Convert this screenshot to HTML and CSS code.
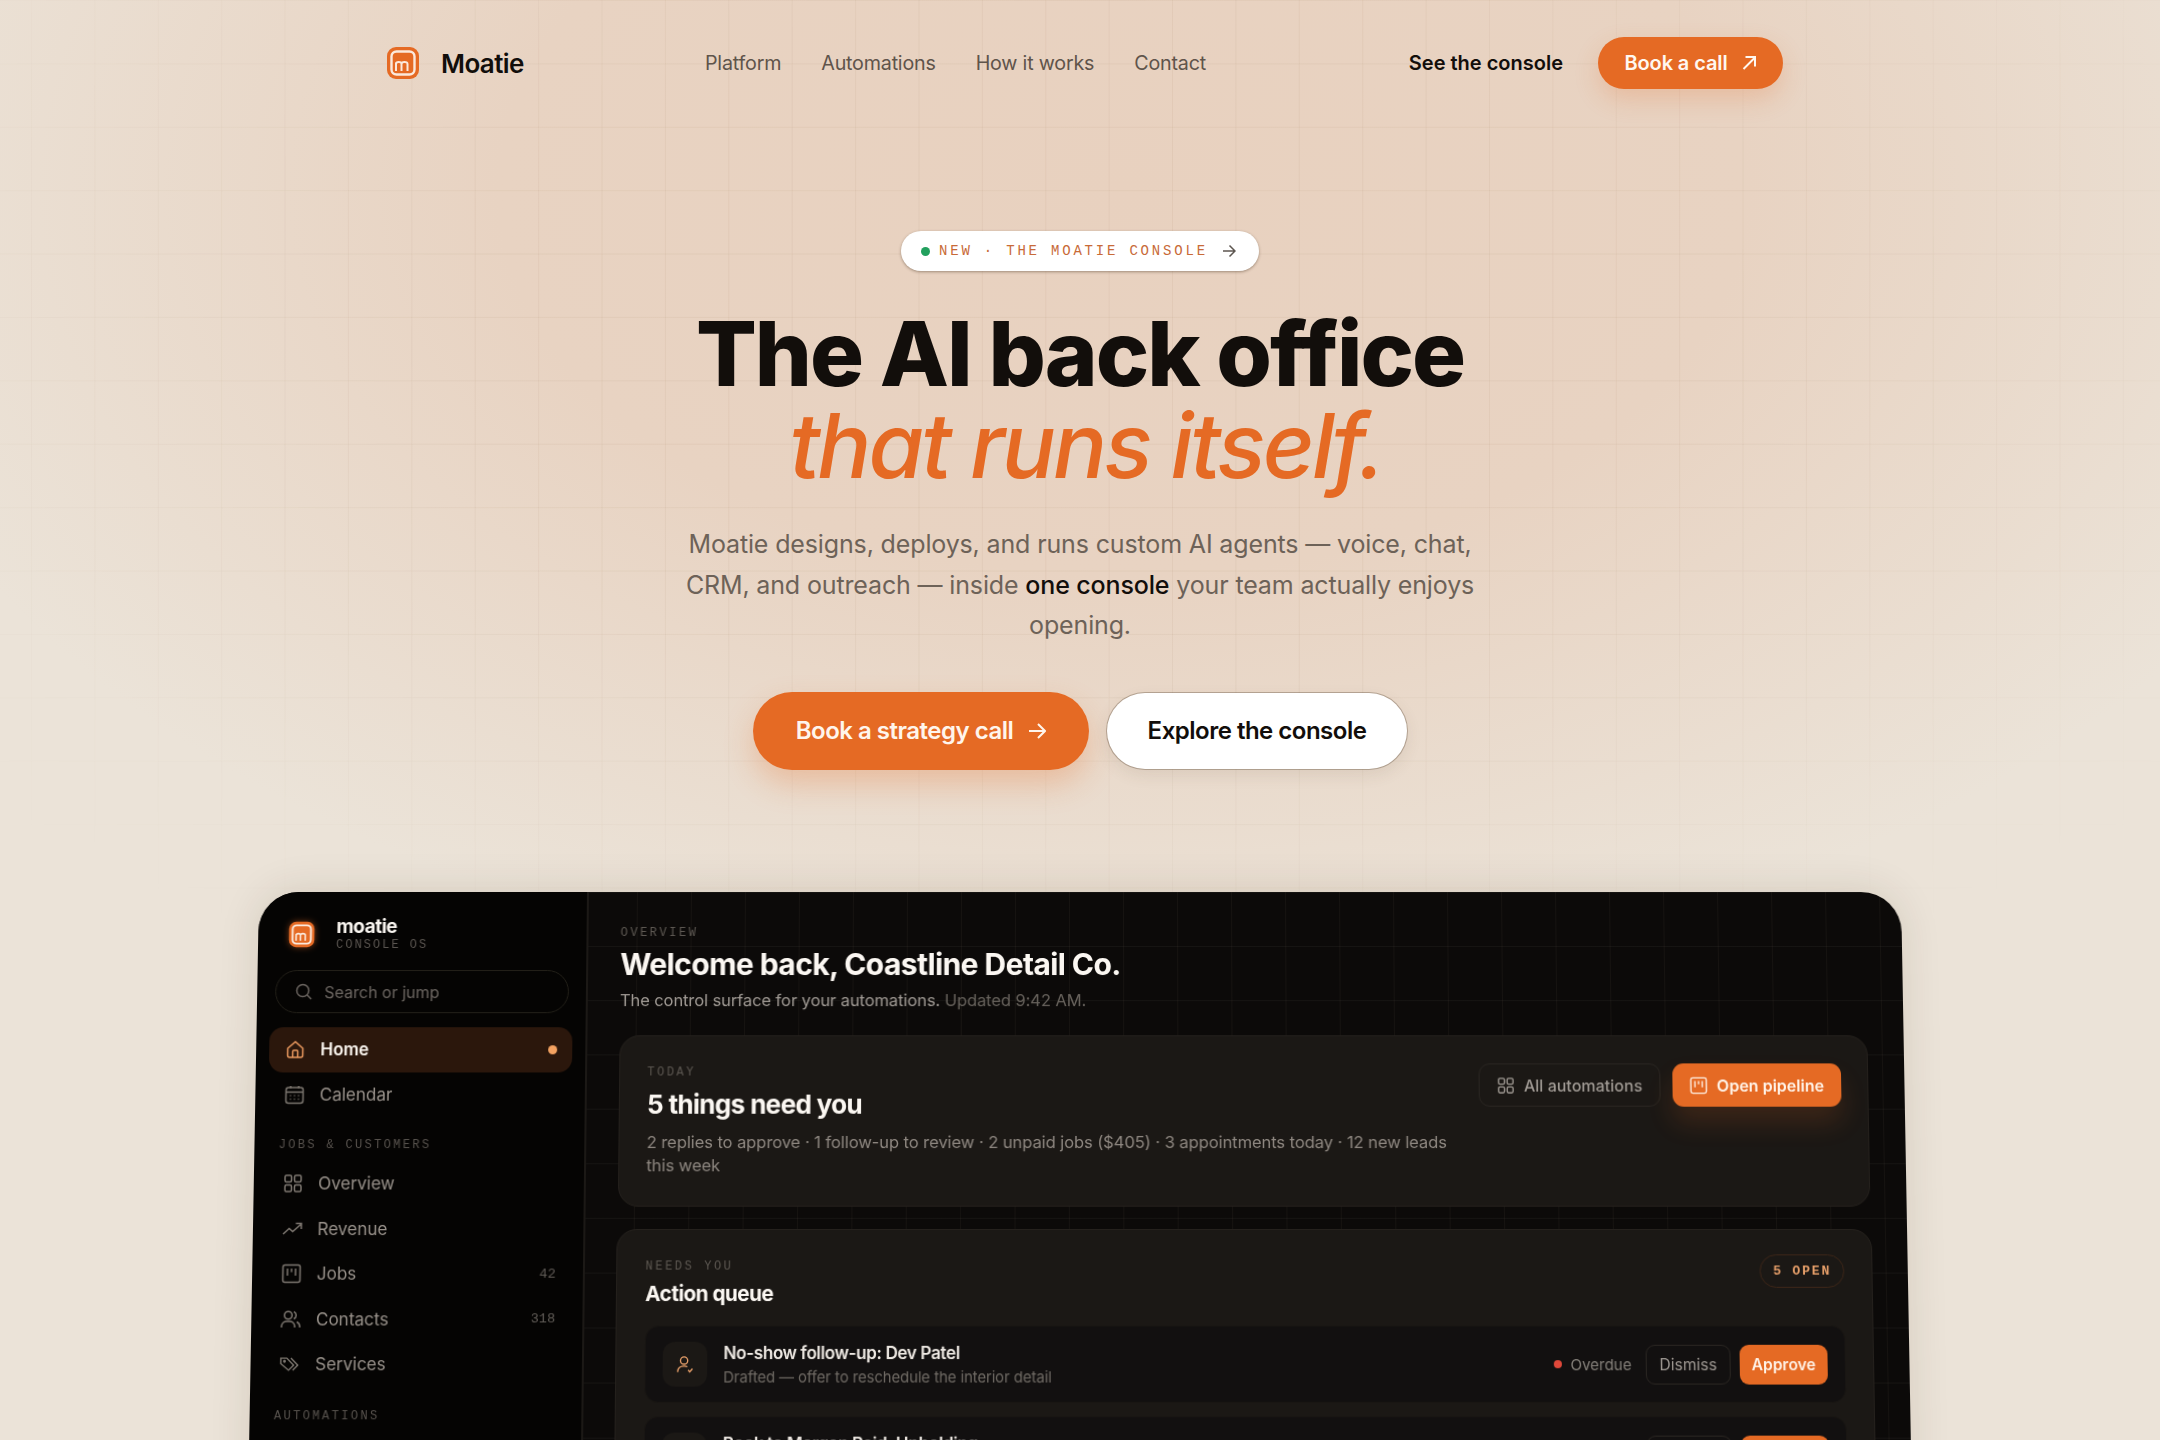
FILE: index.html
```html
<!DOCTYPE html>
<html lang="en">

<head>
    <meta charset="UTF-8">
    <meta name="viewport" content="width=device-width, initial-scale=1.0">
    <title>Moatie - The AI back office</title>
    <link rel="stylesheet" href="styles.css">
</head>

<body>
    <svg class="sprite" aria-hidden="true">
        <defs>
            <symbol id="i-logo" viewBox="0 0 34 34">
                <rect x="1" y="1" width="32" height="32" rx="9" fill="#e56a24" />
                <rect x="5.500" y="5.500" width="23" height="23" rx="5" fill="#e56a24" stroke="#fbe9dc" stroke-width="2.400" />
                <path d="M10 25v-8.500M10 18c0-2.600 5.500-3 5.500 0v7M15.500 18c0-2.600 6-3 6 0v7" fill="none" stroke="#fbe9dc" stroke-width="2" />
            </symbol>
            <symbol id="i-home" viewBox="0 0 20 20">
                <path d="M2.500 9 10 2.500 17.500 9v7a2 2 0 0 1-2 2h-11a2 2 0 0 1-2-2zM7.500 18v-6a1 1 0 0 1 1-1h3a1 1 0 0 1 1 1v6" />
            </symbol>
            <symbol id="i-cal" viewBox="0 0 20 20">
                <rect x="1.500" y="3" width="17" height="15.500" rx="2.500" />
                <path d="M1.500 7.500h17M6 1v3M14 1v3M5.500 11h1M9.500 11h1M13.500 11h1M5.500 14.500h1M9.500 14.500h1M13.500 14.500h1" />
            </symbol>
            <symbol id="i-grid" viewBox="0 0 20 20">
                <rect x="2" y="2" width="6.500" height="6.500" rx="1.500" />
                <rect x="11.500" y="2" width="6.500" height="6.500" rx="1.500" />
                <rect x="2" y="11.500" width="6.500" height="6.500" rx="1.500" />
                <rect x="11.500" y="11.500" width="6.500" height="6.500" rx="1.500" />
            </symbol>
            <symbol id="i-trend" viewBox="0 0 20 20">
                <path d="M1 15l6-5.500 3.500 3L19 5M13.500 4.500H19V10" />
            </symbol>
            <symbol id="i-board" viewBox="0 0 20 20">
                <rect x="1.500" y="1.500" width="17" height="17" rx="2" />
                <path d="M6 5v7M10 5v3.500M14 5v7" />
            </symbol>
            <symbol id="i-users" viewBox="0 0 20 20">
                <circle cx="7.500" cy="6" r="3.800" />
                <path d="M1 18v-1.500A5 5 0 0 1 6 12h3a5 5 0 0 1 5 4.500V18M13 2.500a3.800 3.800 0 0 1 0 7M16 12.500a5 5 0 0 1 3 4.500v1" />
            </symbol>
            <symbol id="i-tags" viewBox="0 0 22 20">
                <path d="M1 3.500h6.500L15 11l-5.500 5.500L1 9.500zM12 3.500 19.500 11 14 16.500" />
                <circle cx="5" cy="7" r="0.800" />
            </symbol>
            <symbol id="i-person" viewBox="0 0 20 20">
                <circle cx="9" cy="6" r="4" />
                <path d="M2 18.500c0-4 2.500-6.500 7-6.500 1.500 0 2.700.3 3.700.8M13.500 16.500l1.800 1.800 3-3.300" />
            </symbol>
        </defs>
    </svg>

    <div class="page">
        <header class="topbar">
            <a class="brand">
                <svg class="brand-mark"><use href="#i-logo" /></svg>
                <span>Moatie</span>
            </a>
            <nav class="nav-links">
                <a>Platform</a>
                <a>Automations</a>
                <a>How it works</a>
                <a>Contact</a>
            </nav>
            <div class="nav-actions">
                <a class="see-link">See the console</a>
                <a class="btn-call">Book a call
                    <svg width="16" height="16" viewBox="0 0 16 16" fill="none" stroke="currentColor" stroke-width="2"><path d="M2.500 14 14 2.500M4.500 2h9.500v9.500" /></svg>
                </a>
            </div>
        </header>

        <section class="hero">
            <div class="pill">
                <span class="pill-dot"></span>
                <span class="pill-text">NEW · THE MOATIE CONSOLE</span>
                <svg width="14" height="14" viewBox="0 0 14 14" fill="none" stroke="#5d5650" stroke-width="1.500"><path d="M1 7h12M7.500 1.500 13 7l-5.500 5.500" /></svg>
            </div>
            <h1>The AI back office<em>that runs itself.</em></h1>
            <p class="lead">Moatie designs, deploys, and runs custom AI agents — voice, chat, CRM, and outreach — inside <strong>one console</strong> your team actually enjoys opening.</p>
            <div class="hero-actions">
                <a class="btn-primary">Book a strategy call
                    <svg width="18" height="18" viewBox="0 0 18 18" fill="none" stroke="currentColor" stroke-width="2"><path d="M1 9h16M10 2l7 7-7 7" /></svg>
                </a>
                <a class="btn-white">Explore the console</a>
            </div>
        </section>

        <div class="console-wrap">
            <div class="console">
                <aside class="side">
                    <div class="side-brand">
                        <svg class="side-mark"><use href="#i-logo" /></svg>
                        <div>
                            <div class="side-name">moatie</div>
                            <div class="side-os">CONSOLE OS</div>
                        </div>
                    </div>
                    <div class="search">
                        <svg width="17" height="17" viewBox="0 0 17 17" fill="none" stroke="currentColor" stroke-width="1.500"><circle cx="7.500" cy="7.500" r="6" /><path d="m12 12 4 4" /></svg>
                        Search or jump
                    </div>
                    <a class="item active">
                        <svg class="ico"><use href="#i-home" /></svg>Home<span class="live"></span>
                    </a>
                    <a class="item"><svg class="ico"><use href="#i-cal" /></svg>Calendar</a>
                    <div class="side-label">JOBS &amp; CUSTOMERS</div>
                    <a class="item"><svg class="ico"><use href="#i-grid" /></svg>Overview</a>
                    <a class="item"><svg class="ico"><use href="#i-trend" /></svg>Revenue</a>
                    <a class="item"><svg class="ico"><use href="#i-board" /></svg>Jobs<span class="count">42</span></a>
                    <a class="item"><svg class="ico"><use href="#i-users" /></svg>Contacts<span class="count">318</span></a>
                    <a class="item"><svg class="ico"><use href="#i-tags" /></svg>Services</a>
                    <div class="side-label">AUTOMATIONS</div>
                </aside>

                <main class="main">
                    <div class="eyebrow">OVERVIEW</div>
                    <h2 class="welcome">Welcome back, Coastline Detail Co.</h2>
                    <p class="welcome-sub">The control surface for your automations. <span>Updated 9:42 AM.</span></p>

                    <section class="card today">
                        <div class="today-text">
                            <div class="eyebrow">TODAY</div>
                            <h3>5 things need you</h3>
                            <p>2 replies to approve · 1 follow-up to review · 2 unpaid jobs ($405) · 3 appointments today · 12 new leads this week</p>
                        </div>
                        <div class="today-actions">
                            <a class="btn-ghost"><svg class="ico-sm"><use href="#i-grid" /></svg>All automations</a>
                            <a class="btn-orange"><svg class="ico-sm"><use href="#i-board" /></svg>Open pipeline</a>
                        </div>
                    </section>

                    <section class="card queue">
                        <div class="queue-head">
                            <div>
                                <div class="eyebrow">NEEDS YOU</div>
                                <h4>Action queue</h4>
                            </div>
                            <span class="open-badge">5 OPEN</span>
                        </div>
                        <div class="row">
                            <div class="row-icon"><svg class="ico-sm"><use href="#i-person" /></svg></div>
                            <div class="row-text">
                                <div class="row-title">No-show follow-up: Dev Patel</div>
                                <div class="row-sub">Drafted — offer to reschedule the interior detail</div>
                            </div>
                            <span class="status"><i></i>Overdue</span>
                            <a class="btn-ghost small">Dismiss</a>
                            <a class="btn-orange small">Approve</a>
                        </div>
                        <div class="row">
                            <div class="row-icon"><svg class="ico-sm"><use href="#i-person" /></svg></div>
                            <div class="row-text">
                                <div class="row-title">Book to Morgan Reid: Upholding</div>
                                <div class="row-sub">Drafted — confirm the appointment</div>
                            </div>
                            <a class="btn-ghost small">Dismiss</a>
                            <a class="btn-orange small">Approve</a>
                        </div>
                    </section>
                </main>
            </div>
        </div>
    </div>
</body>

</html>
```

FILE: styles.css
```css
* {
    box-sizing: border-box;
}

html,
body {
    margin: 0;
    height: 100%;
    overflow: hidden;
}

body {
    font-family: Inter, "Liberation Sans", sans-serif;
    color: #120e0b;
    background-color: #ece4d9;
}

.sprite {
    width: 0;
    height: 0;
    display: block;
}

.page {
    height: 1440px;
    overflow: hidden;
    position: relative;
    background:
        radial-gradient(ellipse 1300px 800px at 52% 190px, #e8d1bf 0%, #e8d3c2 48%, rgba(235, 226, 215, 0) 100%),
        #ebe3d8;
}

/* page grid, fades out towards the edges */
.page::before {
    content: "";
    position: absolute;
    inset: 0 0 450px 0;
    background-image:
        linear-gradient(rgba(130, 90, 50, 0.06) 1px, transparent 1px),
        linear-gradient(90deg, rgba(130, 90, 50, 0.06) 1px, transparent 1px);
    background-size: 63.400px 63.400px;
    background-position: 31px 0;
    -webkit-mask-image: radial-gradient(ellipse 65% 75% at 50% 35%, #000 45%, transparent 100%);
    mask-image: radial-gradient(ellipse 65% 75% at 50% 35%, #000 45%, transparent 100%);
}

/* top bar */
.topbar {
    position: relative;
    display: flex;
    align-items: center;
    height: 52px;
    margin: 37px 377px 0 386px;
}

.brand {
    display: flex;
    align-items: center;
    gap: 21px;
    width: 319px;
    font-size: 26px;
    font-weight: 600;
    letter-spacing: -0.6px;
}

.brand-mark {
    width: 34px;
    height: 34px;
}

.nav-links {
    display: flex;
    gap: 40px;
    font-size: 19.700px;
    color: #5f544b;
    letter-spacing: -0.2px;
}

.nav-actions {
    margin-left: auto;
    display: flex;
    align-items: center;
    gap: 35px;
}

.see-link {
    font-size: 20px;
    font-weight: 600;
    letter-spacing: 0;
}

.btn-call {
    display: flex;
    align-items: center;
    justify-content: center;
    gap: 13px;
    width: 185px;
    height: 52px;
    border-radius: 26px;
    background: #e56a24;
    color: #fff7f0;
    font-size: 20px;
    font-weight: 600;
    letter-spacing: -0.1px;
    box-shadow: 0 10px 24px rgba(229, 106, 36, 0.22);
}

/* hero */
.hero {
    position: relative;
    display: flex;
    flex-direction: column;
    align-items: center;
    margin-top: 142px;
    text-align: center;
}

.pill {
    display: flex;
    align-items: center;
    width: 358px;
    height: 40px;
    padding-left: 20px;
    border-radius: 20px;
    background: #fff;
    box-shadow: 0 1px 3px rgba(70, 50, 30, 0.45);
}

.pill-dot {
    width: 9px;
    height: 9px;
    margin-right: 9px;
    border-radius: 50%;
    background: #22a05e;
}

.pill-text {
    margin-right: 14px;
    font-family: "Liberation Mono", monospace;
    font-size: 14px;
    letter-spacing: 2.800px;
    color: #c86a38;
    white-space: nowrap;
}

h1 {
    margin: 37px 0 0;
    font-size: 90px;
    line-height: 92px;
    font-weight: 800;
    letter-spacing: -2px;
    color: #120e0b;
}

h1 em {
    display: block;
    padding-left: 12px;
    font-weight: 500;
    color: #e56a24;
    letter-spacing: -3px;
}

.lead {
    width: 820px;
    margin: 32px 0 0;
    font-size: 25px;
    line-height: 40.500px;
    color: #6d6258;
    letter-spacing: -0.14px;
}

.lead strong {
    font-weight: 500;
    color: #120e0b;
}

.hero-actions {
    display: flex;
    align-items: center;
    gap: 18px;
    margin-top: 46px;
}

.btn-primary {
    display: flex;
    align-items: center;
    justify-content: center;
    gap: 15px;
    width: 336px;
    height: 78px;
    border-radius: 39px;
    background: #e56a24;
    color: #fff5ec;
    font-size: 24px;
    font-weight: 600;
    letter-spacing: -0.5px;
    box-shadow: 0 14px 30px rgba(229, 106, 36, 0.28);
}

.btn-white {
    display: flex;
    align-items: center;
    justify-content: center;
    width: 300px;
    height: 76px;
    border-radius: 38px;
    background: #fff;
    font-size: 24px;
    font-weight: 600;
    letter-spacing: -0.5px;
    box-shadow: 0 0 0 1px rgba(90, 70, 50, 0.35), 0 6px 16px rgba(90, 70, 50, 0.1);
}

/* console mock-up, tilted back a little */
.console-wrap {
    position: absolute;
    top: 892px;
    left: 259px;
    width: 1642px;
    perspective: 2400px;
    perspective-origin: 50% 0;
}

.console {
    display: flex;
    height: 800px;
    border-radius: 40px 40px 0 0;
    overflow: hidden;
    background-color: #0c0a09;
    background-image:
        linear-gradient(rgba(255, 235, 215, 0.045) 1px, transparent 1px),
        linear-gradient(90deg, rgba(255, 215, 180, 0.045) 1px, transparent 1px);
    background-size: 54px 54px;
    transform-origin: 50% 0;
    transform: rotateX(3deg);
    box-shadow: 0 -2px 40px rgba(60, 40, 20, 0.12);
}

.side {
    flex: none;
    width: 330px;
    padding: 28px 13px 0 13px;
    background: #050403;
    border-right: 2px solid #1c1916;
    color: #98918a;
}

.side-brand {
    display: flex;
    align-items: center;
    gap: 21px;
    padding-left: 17px;
    height: 28px;
}

.side-mark {
    width: 27px;
    height: 27px;
    filter: drop-shadow(0 0 3px rgba(229, 106, 36, 0.5));
}

.side-name {
    font-size: 19px;
    line-height: 19px;
    font-weight: 700;
    color: #f8f4ef;
    letter-spacing: -0.5px;
}

.side-os {
    margin-top: 2px;
    font-family: "Liberation Mono", monospace;
    font-size: 12px;
    line-height: 14px;
    letter-spacing: 2px;
    color: #5a5550;
}

.search {
    display: flex;
    align-items: center;
    gap: 12px;
    height: 43px;
    margin: 22px 4px 14px 5px;
    padding-left: 19px;
    border: 1px solid #232019;
    border-radius: 22px;
    font-size: 16px;
    color: #6b6560;
}

.item {
    display: flex;
    align-items: center;
    gap: 15px;
    height: 44.500px;
    padding: 0 14px 0 16px;
    border-radius: 14px;
    font-size: 17px;
    color: #98918a;
}

.item.active {
    background: #2b170c;
    color: #fbf6f0;
    font-weight: 600;
}

.item.active .ico {
    color: #ec9a5f;
}

.ico {
    flex: none;
    width: 20px;
    height: 20px;
    color: #7c766f;
    fill: none;
    stroke: currentColor;
    stroke-width: 1.500;
}

.ico-sm {
    flex: none;
    width: 18px;
    height: 18px;
    fill: none;
    stroke: currentColor;
    stroke-width: 1.500;
}

.live {
    margin-left: auto;
    margin-right: 1px;
    width: 9px;
    height: 9px;
    border-radius: 50%;
    background: #f4a261;
}

.count {
    margin-left: auto;
    font-family: "Liberation Mono", monospace;
    font-size: 13.500px;
    color: #5f5a55;
}

.side-label {
    height: 16px;
    margin: 20px 0 8px 11px;
    font-family: "Liberation Mono", monospace;
    font-size: 12px;
    line-height: 16px;
    letter-spacing: 2.300px;
    color: #55504b;
}

.main {
    flex: 1;
    min-width: 0;
    padding: 33px 36px 0 32px;
}

.eyebrow {
    font-family: "Liberation Mono", monospace;
    font-size: 12px;
    line-height: 16px;
    letter-spacing: 2.500px;
    color: #5c5751;
}

.welcome {
    margin: 5px 0 0;
    font-size: 30px;
    line-height: 36px;
    font-weight: 700;
    letter-spacing: -0.6px;
    color: #fbf7f2;
}

.welcome-sub {
    margin: 8px 0 0;
    font-size: 16.500px;
    line-height: 20px;
    color: #a09a94;
    letter-spacing: -0.1px;
}

.welcome-sub span {
    color: #66615b;
}

.card {
    background: #1b1815;
    border: 1px solid #24201c;
    border-radius: 20px;
}

.today {
    display: flex;
    justify-content: space-between;
    height: 170px;
    margin-top: 25px;
    padding: 28px 26px 0 27px;
}

.today-text {
    width: 810px;
}

.today h3 {
    margin: 8px 0 0;
    font-size: 26px;
    line-height: 32px;
    font-weight: 700;
    letter-spacing: -0.7px;
    color: #fbf7f2;
}

.today p {
    margin: 10px 0 0;
    font-size: 16.500px;
    line-height: 23px;
    color: #8e8780;
    letter-spacing: -0.09px;
}

.today-actions {
    display: flex;
    gap: 12px;
    flex: none;
    margin-top: -1px;
}

.btn-ghost,
.btn-orange {
    display: flex;
    align-items: center;
    justify-content: center;
    gap: 9px;
    height: 43px;
    border-radius: 11px;
    font-size: 16px;
    white-space: nowrap;
}

.btn-ghost {
    width: 181px;
    border: 1px solid #2a2622;
    color: #a09a94;
    font-weight: 500;
}

.btn-orange {
    width: 168px;
    background: #e56a24;
    color: #fff3e8;
    font-weight: 600;
    box-shadow: 0 16px 26px rgba(229, 106, 36, 0.16);
}

.btn-ghost.small,
.btn-orange.small {
    flex: none;
    height: 39px;
    font-size: 15.500px;
    border-radius: 9px;
    box-shadow: none;
}

.btn-ghost.small {
    width: 84px;
    background: #121010;
    font-weight: 400;
}

.btn-orange.small {
    width: 87px;
    margin: 0 0 0 9px;
}

.queue {
    margin-top: 22px;
    margin-left: -1px;
    margin-right: -1px;
    padding: 28px 27px 30px 28px;
    height: 500px;
}

.queue-head {
    display: flex;
    justify-content: space-between;
    align-items: flex-start;
}

.queue h4 {
    margin: 5px 0 0;
    font-size: 20.500px;
    line-height: 28px;
    font-weight: 700;
    letter-spacing: -0.5px;
    color: #fbf7f2;
}

.open-badge {
    display: flex;
    align-items: center;
    height: 33px;
    margin-top: -4px;
    padding: 0 12px;
    border: 1px solid #3d2618;
    border-radius: 17px;
    font-family: "Liberation Mono", monospace;
    font-size: 13px;
    font-weight: 700;
    letter-spacing: 1.800px;
    color: #e8a06a;
}

.row {
    display: flex;
    align-items: center;
    height: 76px;
    margin-top: 13px;
    padding: 0 17px 0 17px;
    background: #121010;
    border-radius: 14px;
    border: 1px solid #191613;
}

.queue-head + .row {
    margin-top: 17px;
}

.row-icon {
    display: flex;
    align-items: center;
    justify-content: center;
    width: 44px;
    height: 44px;
    margin-right: 16px;
    background: #1b1815;
    border-radius: 12px;
    color: #e8a06a;
}

.row-text {
    flex: 1;
    min-width: 0;
}

.row-title {
    font-size: 17px;
    line-height: 22px;
    font-weight: 600;
    letter-spacing: -0.4px;
    color: #eee9e3;
}

.row-sub {
    margin-top: 3px;
    font-size: 14.800px;
    line-height: 20px;
    color: #6f6a64;
    letter-spacing: -0.1px;
}

.status {
    display: flex;
    align-items: center;
    gap: 8px;
    margin-right: 14px;
    font-size: 15px;
    color: #85807a;
}

.status i {
    width: 8px;
    height: 8px;
    border-radius: 50%;
    background: #e0483a;
}
```
